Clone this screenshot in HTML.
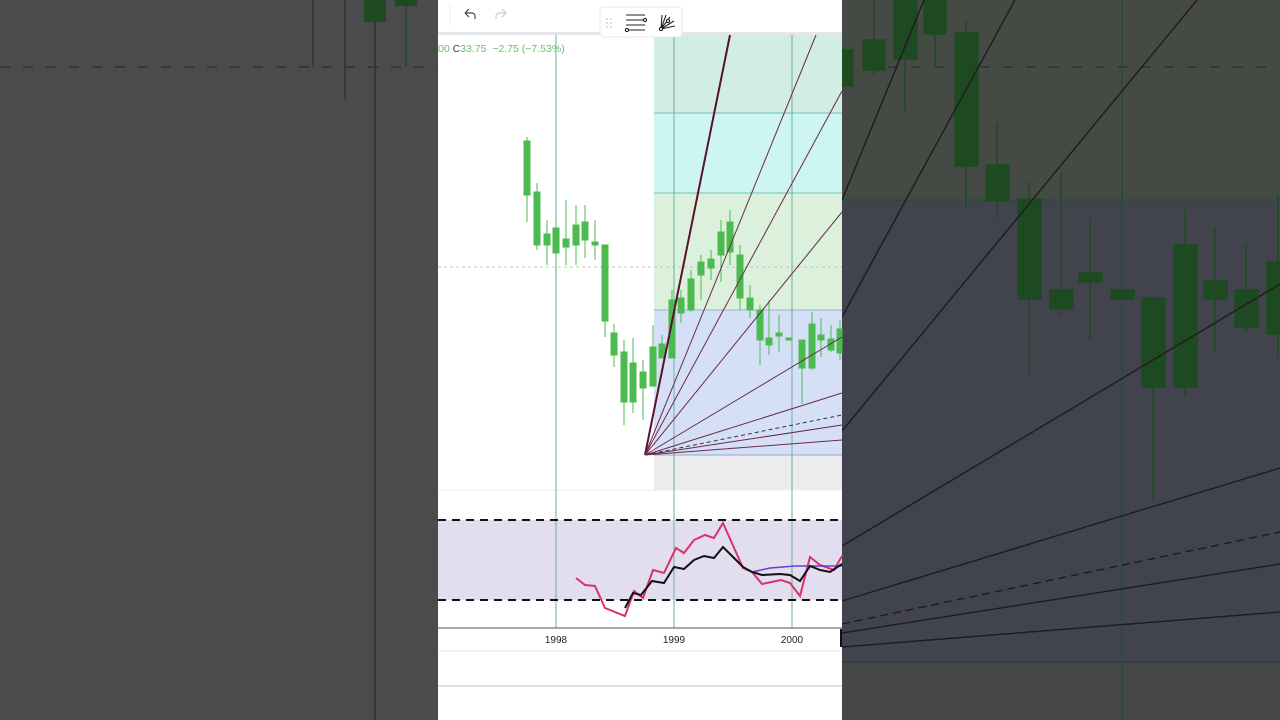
<!DOCTYPE html>
<html><head><meta charset="utf-8"><style>
html,body{margin:0;padding:0;width:1280px;height:720px;overflow:hidden;background:#4b4b4b;font-family:"Liberation Sans",sans-serif}
svg{position:absolute;left:0;top:0}
</style></head><body>
<svg width="1280" height="720" viewBox="0 0 1280 720" xmlns="http://www.w3.org/2000/svg">
<rect x="0" y="0" width="438" height="720" fill="#4b4b4b"/>
<line x1="0" y1="67" x2="438" y2="67" stroke="#333" stroke-width="1.5" stroke-dasharray="10,13"/>
<line x1="375" y1="0" x2="375" y2="720" stroke="#2c3a33" stroke-width="2"/>
<line x1="313" y1="0" x2="313" y2="67" stroke="#2a3a2a" stroke-width="1.5"/>
<line x1="345" y1="0" x2="345" y2="100" stroke="#2a3a2a" stroke-width="1.5"/>
<rect x="364" y="0" width="22" height="22" fill="#1e4a22"/>
<rect x="395" y="0" width="22" height="6" fill="#1e4a22"/>
<line x1="406" y1="0" x2="406" y2="67" stroke="#1e4a22" stroke-width="1.5"/>

<rect x="842" y="0" width="438" height="200" fill="#454a44"/>
<rect x="842" y="200" width="438" height="462" fill="#41444c"/>
<rect x="842" y="662" width="438" height="58" fill="#474747"/>
<line x1="842" y1="200" x2="1280" y2="200" stroke="#2e4a38" stroke-width="1.5"/>
<line x1="842" y1="662" x2="1280" y2="662" stroke="#2e3a4a" stroke-width="1.5"/>
<line x1="842" y1="67" x2="1280" y2="67" stroke="#333" stroke-width="1.5" stroke-dasharray="10,13"/>
<line x1="1122" y1="0" x2="1122" y2="720" stroke="#2c4a3e" stroke-width="2"/>
<g fill="#1e4a22" stroke="#1e4a22" stroke-width="1.5">
<rect x="842" y="50" width="11" height="36"/>
<line x1="874" y1="0" x2="874" y2="75"/><rect x="863" y="40" width="22" height="30"/>
<line x1="905" y1="0" x2="905" y2="111"/><rect x="894" y="0" width="23" height="59"/>
<line x1="935" y1="0" x2="935" y2="67"/><rect x="924" y="0" width="22" height="34"/>
<line x1="966" y1="21" x2="966" y2="208"/><rect x="955" y="33" width="23" height="133"/>
<line x1="997" y1="122" x2="997" y2="218"/><rect x="986" y="165" width="23" height="36"/>
<line x1="1029" y1="182" x2="1029" y2="376"/><rect x="1018" y="199" width="23" height="100"/>
<line x1="1061" y1="172" x2="1061" y2="315"/><rect x="1050" y="290" width="23" height="19"/>
<line x1="1090" y1="218" x2="1090" y2="340"/><rect x="1079" y="273" width="23" height="9"/>
<rect x="1111" y="290" width="23" height="9"/>
<line x1="1153" y1="298" x2="1153" y2="500"/><rect x="1142" y="298" width="23" height="89"/>
<line x1="1185" y1="210" x2="1185" y2="395"/><rect x="1174" y="245" width="23" height="142"/>
<line x1="1215" y1="228" x2="1215" y2="352"/><rect x="1204" y="281" width="23" height="18"/>
<line x1="1246" y1="245" x2="1246" y2="332"/><rect x="1235" y="290" width="23" height="37"/>
<line x1="1278" y1="195" x2="1278" y2="358"/><rect x="1267" y="262" width="13" height="72"/>
</g>
<g stroke="#221822" stroke-width="1.4" fill="none">
<line x1="842" y1="200" x2="924" y2="0"/>
<line x1="842" y1="317" x2="1015" y2="0"/>
<line x1="842" y1="431" x2="1197" y2="0"/>
<line x1="842" y1="546" x2="1280" y2="284"/>
<line x1="842" y1="601" x2="1280" y2="468"/>
<line x1="842" y1="624" x2="1280" y2="532" stroke-dasharray="8,5"/>
<line x1="842" y1="633" x2="1280" y2="564"/>
<line x1="842" y1="647" x2="1280" y2="612"/>
</g>

<rect x="438" y="0" width="404" height="720" fill="#fff"/>
<rect x="438" y="32" width="404" height="3" fill="#e4e6ea"/>
<rect x="654" y="35" width="188" height="78" fill="#d2ede3"/>
<rect x="654" y="113" width="188" height="80" fill="#cdf5f1"/>
<rect x="654" y="193" width="188" height="117" fill="#dbf1dc"/>
<rect x="654" y="310" width="188" height="145" fill="#d5e0f7"/>
<rect x="654" y="455" width="188" height="35" fill="#ececee"/>
<g stroke="#6fc3b0" stroke-width="1"><line x1="654" y1="113" x2="842" y2="113"/><line x1="654" y1="193" x2="842" y2="193"/></g>
<line x1="654" y1="310" x2="842" y2="310" stroke="#8fb5c8" stroke-width="1"/>
<line x1="654" y1="455" x2="842" y2="455" stroke="#8ea8d8" stroke-width="1"/>
<line x1="438" y1="267" x2="842" y2="267" stroke="#c4c4c4" stroke-dasharray="3,3"/>
<line x1="438" y1="490" x2="842" y2="490" stroke="#eeeeee"/>
<rect x="438" y="520" width="404" height="80" fill="#e3ddf0"/>
<g stroke="#6fada0" stroke-width="1"><line x1="556" y1="35" x2="556" y2="628"/><line x1="674" y1="35" x2="674" y2="628"/><line x1="792" y1="35" x2="792" y2="628"/></g>
<g stroke="#111" stroke-width="2" stroke-dasharray="8,6"><line x1="438" y1="520" x2="842" y2="520"/><line x1="438" y1="600" x2="842" y2="600"/></g>
<g fill="#4cbb4f" stroke="#4cbb4f" stroke-width="1">
<line x1="527" y1="137" x2="527" y2="222"/><rect x="524" y="141" width="6" height="54"/>
<line x1="537" y1="183" x2="537" y2="250"/><rect x="534" y="192" width="6" height="53"/>
<line x1="547" y1="220" x2="547" y2="265"/><rect x="544" y="234" width="6" height="11"/>
<line x1="556" y1="218" x2="556" y2="275"/><rect x="553" y="228" width="6" height="25"/>
<line x1="566" y1="200" x2="566" y2="265"/><rect x="563" y="239" width="6" height="8"/>
<line x1="576" y1="205" x2="576" y2="265"/><rect x="573" y="225" width="6" height="20"/>
<line x1="585" y1="205" x2="585" y2="258"/><rect x="582" y="222" width="6" height="18"/>
<line x1="595" y1="220" x2="595" y2="260"/><rect x="592" y="242" width="6" height="3"/>
<line x1="605" y1="245" x2="605" y2="337"/><rect x="602" y="245" width="6" height="76"/>
<line x1="614" y1="324" x2="614" y2="367"/><rect x="611" y="333" width="6" height="22"/>
<line x1="624" y1="340" x2="624" y2="425"/><rect x="621" y="352" width="6" height="50"/>
<line x1="633" y1="338" x2="633" y2="413"/><rect x="630" y="363" width="6" height="39"/>
<line x1="643" y1="360" x2="643" y2="420"/><rect x="640" y="372" width="6" height="16"/>
<line x1="653" y1="325" x2="653" y2="387"/><rect x="650" y="347" width="6" height="39"/>
<line x1="662" y1="335" x2="662" y2="358"/><rect x="659" y="344" width="6" height="14"/>
<line x1="672" y1="290" x2="672" y2="358"/><rect x="669" y="300" width="6" height="58"/>
<line x1="681" y1="290" x2="681" y2="323"/><rect x="678" y="298" width="6" height="15"/>
<line x1="691" y1="270" x2="691" y2="312"/><rect x="688" y="279" width="6" height="31"/>
<line x1="701" y1="255" x2="701" y2="300"/><rect x="698" y="262" width="6" height="13"/>
<line x1="711" y1="250" x2="711" y2="280"/><rect x="708" y="259" width="6" height="9"/>
<line x1="721" y1="220" x2="721" y2="282"/><rect x="718" y="232" width="6" height="23"/>
<line x1="730" y1="210" x2="730" y2="265"/><rect x="727" y="222" width="6" height="30"/>
<line x1="740" y1="245" x2="740" y2="310"/><rect x="737" y="255" width="6" height="43"/>
<line x1="750" y1="285" x2="750" y2="318"/><rect x="747" y="298" width="6" height="12"/>
<line x1="760" y1="305" x2="760" y2="365"/><rect x="757" y="310" width="6" height="30"/>
<line x1="769" y1="300" x2="769" y2="355"/><rect x="766" y="338" width="6" height="7"/>
<line x1="779" y1="315" x2="779" y2="352"/><rect x="776" y="333" width="6" height="3"/>
<rect x="786" y="338" width="6" height="2"/>
<line x1="802" y1="340" x2="802" y2="404"/><rect x="799" y="340" width="6" height="28"/>
<line x1="812" y1="312" x2="812" y2="370"/><rect x="809" y="324" width="6" height="44"/>
<line x1="821" y1="318" x2="821" y2="357"/><rect x="818" y="335" width="6" height="5"/>
<line x1="831" y1="325" x2="831" y2="352"/><rect x="828" y="339" width="6" height="11"/>
<line x1="840" y1="320" x2="840" y2="360"/><rect x="837" y="329" width="5" height="24"/>
</g>
<g stroke="#6a2a4a" stroke-width="1" fill="none">
<line x1="645" y1="455" x2="730" y2="35" stroke="#5a1030" stroke-width="2"/>
<line x1="645" y1="455" x2="816" y2="35"/>
<line x1="645" y1="455" x2="842" y2="91"/>
<line x1="645" y1="455" x2="842" y2="212"/>
<line x1="645" y1="455" x2="842" y2="337"/>
<line x1="645" y1="455" x2="842" y2="393"/>
<line x1="645" y1="455" x2="842" y2="415" stroke="#333" stroke-dasharray="4,3"/>
<line x1="645" y1="455" x2="842" y2="425"/>
<line x1="645" y1="455" x2="842" y2="440"/>
</g>
<polyline fill="none" stroke="#d6336c" stroke-width="2" points="576,578 585,585 595,586 605,608 625,616 634,591 643,598 653,570 664,573 676,548 684,553 694,540 705,535 714,538 723,523 743,568 752,572 762,584 781,580 790,583 800,596 810,557 820,565 834,570 842,556"/>
<polyline fill="none" stroke="#6a3ed0" stroke-width="1.5" points="752,572 770,568 795,566 820,566 842,566"/>
<polyline fill="none" stroke="#111" stroke-width="2" points="625,608 633,593 641,595 652,581 664,583 674,567 684,569 694,560 704,556 714,558 723,547 743,567 752,572 762,575 780,574 790,575 800,581 810,566 820,570 830,572 842,564"/>
<line x1="438" y1="628" x2="842" y2="628" stroke="#555" stroke-width="1"/>
<line x1="438" y1="651" x2="842" y2="651" stroke="#e6e6e6" stroke-width="1"/>
<line x1="438" y1="686" x2="842" y2="686" stroke="#dde2e2" stroke-width="2"/>
<line x1="841" y1="629" x2="841" y2="647" stroke="#111" stroke-width="2"/>
<g font-size="10" fill="#222" text-anchor="middle" font-family="Liberation Sans, sans-serif">
<text x="556" y="643">1998</text><text x="674" y="643">1999</text><text x="792" y="643">2000</text></g>
<text x="438" y="52" font-size="10.5" fill="#6cc070" xml:space="preserve">00 <tspan fill="#444">C</tspan>33.75  −2.75 (−7.53%)</text>
<line x1="450" y1="5" x2="450" y2="26" stroke="#eee"/>
<path d="M465 13 l4 -4 M465 13 l4 4 M465 13 h7 a3 3 0 0 1 3 3 v3" stroke="#444" stroke-width="1.2" fill="none"/>
<path d="M506 13 l-4 -4 M506 13 l-4 4 M506 13 h-7 a3 3 0 0 0 -3 3 v3" stroke="#ccc" stroke-width="1.2" fill="none"/>
<rect x="600" y="7" width="82" height="30" rx="4" fill="#fff" stroke="#e8e8e8"/>
<g fill="#c8c8c8"><circle cx="607" cy="19" r="0.9"/><circle cx="611" cy="19" r="0.9"/><circle cx="607" cy="23" r="0.9"/><circle cx="611" cy="23" r="0.9"/><circle cx="607" cy="27" r="0.9"/><circle cx="611" cy="27" r="0.9"/></g>
<g stroke="#222" stroke-width="1.1" fill="none">
<line x1="626" y1="15" x2="645" y2="15"/><line x1="626" y1="20" x2="643" y2="20"/><line x1="626" y1="25" x2="645" y2="25"/><line x1="628" y1="30" x2="645" y2="30"/>
<circle cx="645" cy="20" r="1.6" fill="#fff"/><circle cx="627" cy="30" r="1.6" fill="#fff"/>
<path d="M661 29 L662 15 M661 29 L666 15 M661 29 L670 17 M661 29 L674 21 M661 29 L675 26"/>
<circle cx="661" cy="29" r="1.6" fill="#fff"/><circle cx="668" cy="21" r="1.6" fill="#fff"/>
</g>
</svg>
</body></html>
